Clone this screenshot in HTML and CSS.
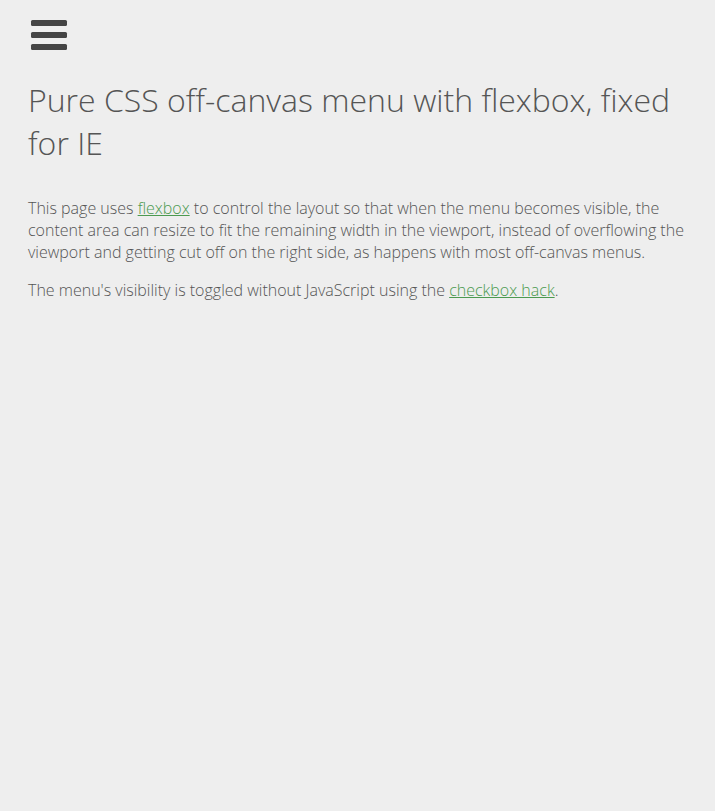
FILE: index.html
```html
<!DOCTYPE html>
<html lang="en">
<head>
<meta charset="utf-8">
<title>Pure CSS off-canvas menu with flexbox</title>
<link rel="stylesheet" href="styles.css">
</head>
<body>
<div class="page">
  <label class="menu-toggle" aria-label="Toggle menu">
    <span class="bar"></span>
    <span class="bar"></span>
    <span class="bar"></span>
  </label>
  <main class="content">
    <h1 class="title">Pure CSS off-canvas menu with flexbox, fixed for IE</h1>
    <p class="text">This page uses <a class="link" href="#">flexbox</a> to control the layout so that when the menu becomes visible, the content area can resize to fit the remaining width in the viewport, instead of overflowing the viewport and getting cut off on the right side, as happens with most off-canvas menus.</p>
    <p class="text">The menu's visibility is toggled without JavaScript using the <a class="link" href="#">checkbox hack</a>.</p>
  </main>
</div>
</body>
</html>
```

FILE: styles.css
```css
html, body {
  margin: 0;
  padding: 0;
  background: #eeeeee;
  height: 100%;
}
body {
  font-family: "Open Sans", "Liberation Sans", sans-serif;
  font-weight: 300;
  color: #555555;
}
.page {
  padding: 0 28px;
}
.menu-toggle {
  display: flex;
  flex-direction: column;
  gap: 6px;
  width: 36px;
  padding-top: 20px;
  margin-left: 3px;
  cursor: pointer;
}
.bar {
  display: block;
  height: 6px;
  background: #444444;
  border-radius: 1.5px;
}
.title {
  font-size: 32px;
  font-weight: 300;
  line-height: 43px;
  margin: 28px 0 33px;
}
.text {
  font-size: 16px;
  line-height: 22px;
  margin: 0 0 16px;
}
.link {
  color: #4c9a50;
  text-decoration: underline;
}
```
